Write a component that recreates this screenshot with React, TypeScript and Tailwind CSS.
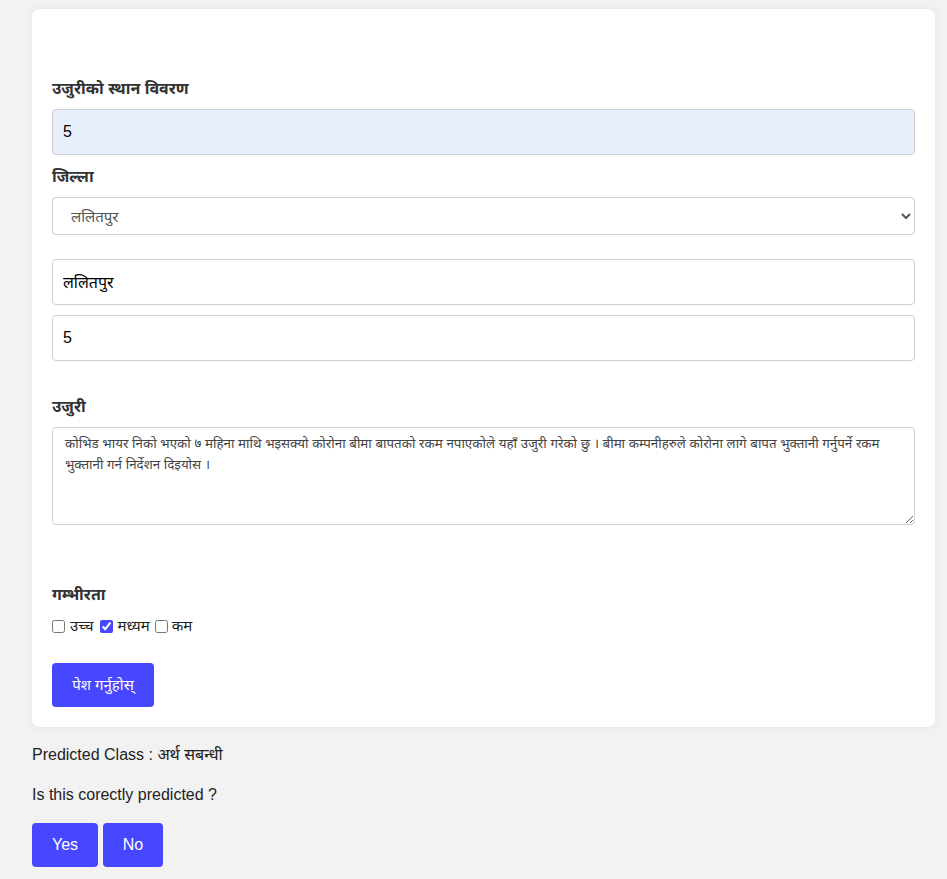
import React from "react";

export default function App() {
  const font = { fontFamily: '"Liberation Sans", "Noto Sans", sans-serif' };
  return (
    <div className="min-h-[879px] bg-[#f2f2f2] pt-[9px] pb-[12px] pl-[32px] pr-[12px] text-[#212121]" style={font}>
      <div className="bg-white rounded-[8px] shadow-[0_0_10px_rgba(0,0,0,0.06)] px-[20px] pt-[68px] pb-[20px]">
        <label className="block text-[16px] font-bold leading-[24px] mb-[8px] text-[#333]">उजुरीको स्थान विवरण</label>
        <input
          readOnly
          value="5"
          className="block w-full h-[46px] px-[10px] text-[16px] bg-[#e8f0fe] border border-[#cfcfcf] rounded-[4px] outline-none text-black"
        />
        <label className="block text-[16px] font-bold leading-[24px] mt-[10px] mb-[8px] text-[#333]">जिल्ला</label>
        <select
          defaultValue="ललितपुर"
          className="block w-full h-[38px] px-[14px] text-[15px] bg-white border border-[#cfcfcf] rounded-[4px] text-[#555]"
        >
          <option>ललितपुर</option>
        </select>
        <input
          readOnly
          value="ललितपुर"
          className="block w-full h-[46px] mt-[24px] px-[10px] text-[16px] bg-white border border-[#cfcfcf] rounded-[4px] outline-none text-black"
        />
        <input
          readOnly
          value="5"
          className="block w-full h-[46px] mt-[10px] px-[10px] text-[16px] bg-white border border-[#cfcfcf] rounded-[4px] outline-none text-black"
        />
        <label className="block text-[16px] font-bold leading-[24px] mt-[34px] mb-[8px] text-[#333]">उजुरी</label>
        <textarea
          readOnly
          defaultValue="कोभिड भायर निको भएको ७ महिना माथि भइसक्यो कोरोना बीमा बापतको रकम नपाएकोले यहाँ उजुरी गरेको छु । बीमा कम्पनीहरुले कोरोना लागे बापत भुक्तानी गर्नुपर्ने रकम भुक्तानी गर्न निर्देशन दिइयोस ।"
          className="block w-full h-[98px] px-[12px] py-[5px] text-[13.33px] leading-[21px] bg-white border border-[#cfcfcf] rounded-[4px] outline-none text-[#444]"
        />
        <label className="block text-[16px] font-bold leading-[24px] mt-[58px] mb-[9px] text-[#333]">गम्भीरता</label>
        <div className="flex items-center text-[15px] leading-[20px] text-[#222]">
          <input type="checkbox" className="w-[13px] h-[13px] m-0 mr-[5px]" />
          <span className="mr-[7px]">उच्च</span>
          <input type="checkbox" defaultChecked className="w-[13px] h-[13px] m-0 mr-[4px] accent-[#4747ff]" />
          <span className="mr-[5px]">मध्यम</span>
          <input type="checkbox" className="w-[13px] h-[13px] m-0 mr-[4px]" />
          <span>कम</span>
        </div>
        <button className="mt-[27px] h-[44px] w-[102px] bg-[#4747ff] text-white text-[15px] rounded-[4px]">
          पेश गर्नुहोस्
        </button>
      </div>
      <p className="mt-[16px] text-[16px] leading-[24px] text-[#222]">Predicted Class : अर्थ सबन्धी</p>
      <p className="mt-[16px] text-[16px] leading-[24px] text-[#222]">Is this corectly predicted ?</p>
      <div className="flex gap-[5px] mt-[16px]">
        <button className="h-[44px] w-[66px] bg-[#4747ff] text-white text-[16px] rounded-[4px]">Yes</button>
        <button className="h-[44px] w-[60px] bg-[#4747ff] text-white text-[16px] rounded-[4px]">No</button>
      </div>
    </div>
  );
}
